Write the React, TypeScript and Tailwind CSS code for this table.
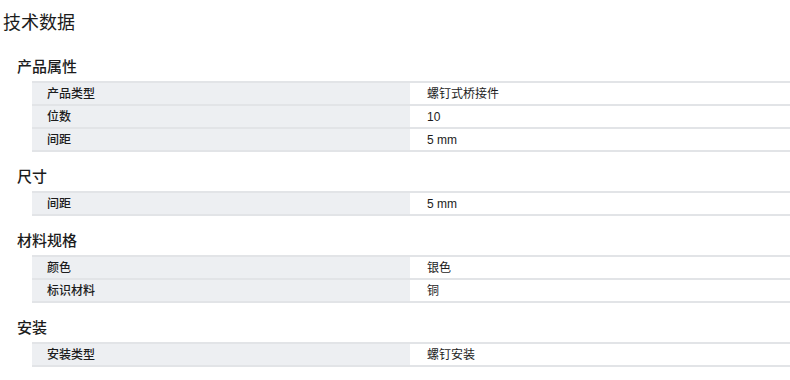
const sections = [
  {
    title: '产品属性',
    rows: [
      ['产品类型', '螺钉式桥接件'],
      ['位数', '10'],
      ['间距', '5 mm'],
    ],
  },
  { title: '尺寸', rows: [['间距', '5 mm']] },
  {
    title: '材料规格',
    rows: [
      ['颜色', '银色'],
      ['标识材料', '铜'],
    ],
  },
  { title: '安装', rows: [['安装类型', '螺钉安装']] },
];

const App = () => {
  return (
    <div className="w-[790px] h-[380px] overflow-hidden bg-white text-[#1c1c1c] font-['Liberation_Sans','Noto_Sans_CJK_SC',sans-serif]">
      {/* Page title */}
      <div className="h-[42px] pt-[12px] pl-[3px] text-[18px] leading-[22px]">技术数据</div>

      {sections.map((section) => (
        <div key={section.title}>
          <div className="pl-[17px] pt-[16px] pb-[5px] text-[15px] leading-[18px] font-medium">
            {section.title}
          </div>
          <div className="ml-[32px] border-t-2 border-[#e2e4e7]">
            {section.rows.map(([label, value]) => (
              <div key={label} className="flex h-[23px] border-b-2 border-[#e2e4e7] text-[12px]">
                <div className="w-[378px] bg-[#edeff2] pl-[15px] flex items-center font-medium">{label}</div>
                <div className="flex-1 pl-[17px] flex items-center">{value}</div>
              </div>
            ))}
          </div>
        </div>
      ))}
    </div>
  );
};

export default App;
